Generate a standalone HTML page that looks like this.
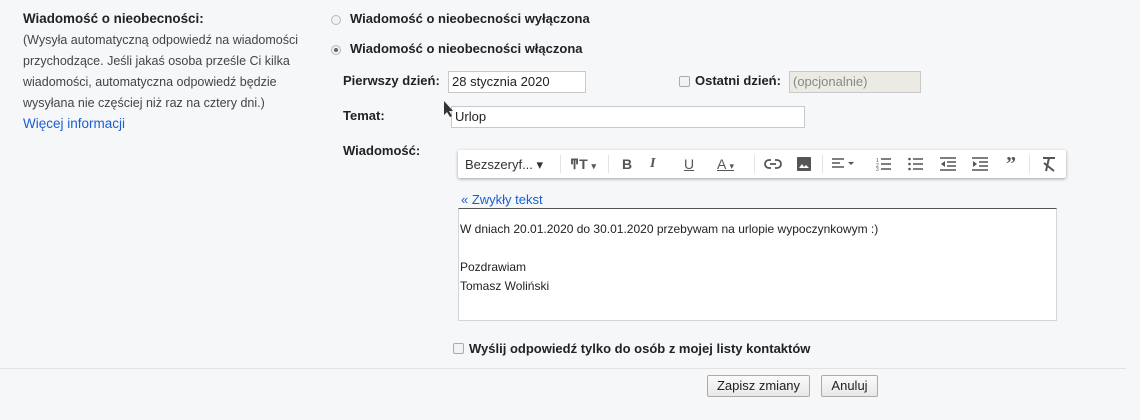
<!DOCTYPE html>
<html><head><meta charset="utf-8"><style>
body{margin:0;width:1140px;height:420px;background:#f6f7f9;font-family:"Liberation Sans",Arial,sans-serif;color:#222;position:relative;overflow:hidden}
.a{position:absolute;white-space:nowrap}
.b{font-weight:bold;font-size:13px}
.d{font-size:12.5px;color:#444;line-height:21px}
.inp{position:absolute;background:#fff;border:1px solid #c9c9c9;box-sizing:border-box;font-size:13px;padding:2px 3px;color:#222}
.rad{position:absolute;width:10px;height:10px;border:1px solid #b9b9b9;border-radius:50%;background:#f2f2f2;box-sizing:border-box}
.cb{position:absolute;width:11px;height:11px;border:1px solid #aaa;border-radius:2px;background:#f3f3f3;box-sizing:border-box}
.btn{position:absolute;border:1px solid #aaa;background:linear-gradient(#fafafa,#e8e8e8);font-size:13px;text-align:center;line-height:19px;box-sizing:border-box;border-radius:2px}
.tb{position:absolute;left:458px;top:150px;width:608px;height:28px;background:#fff;box-shadow:0 1px 3px rgba(0,0,0,.35);border-radius:2px}
.ti{position:absolute;top:6px;font-size:14px;color:#555;font-weight:bold}
.sep{position:absolute;top:5px;width:1px;height:18px;background:#e3e3e3}
</style></head><body>
<div class="a b" style="left:23px;top:11px;font-size:13.4px">Wiadomość o nieobecności:</div>
<div class="a d" style="left:23px;top:30px">(Wysyła automatyczną odpowiedź na wiadomości<br>przychodzące. Jeśli jakaś osoba prześle Ci kilka<br>wiadomości, automatyczna odpowiedź będzie<br>wysyłana nie częściej niż raz na cztery dni.)</div>
<div class="a" style="left:23px;top:116px;font-size:13.5px;color:#1a5fd0">Więcej informacji</div>

<div class="rad" style="left:331px;top:15px"></div>
<div class="a b" style="left:350px;top:11px">Wiadomość o nieobecności wyłączona</div>
<div class="rad" style="left:331px;top:45px"></div><div class="a" style="left:334px;top:48px;width:4px;height:4px;border-radius:50%;background:#666"></div>
<div class="a b" style="left:350px;top:41px">Wiadomość o nieobecności włączona</div>

<div class="a b" style="left:343px;top:73px">Pierwszy dzień:</div>
<div class="inp" style="left:448px;top:71px;width:138px;height:22px">28 stycznia 2020</div>
<div class="cb" style="left:679px;top:76px"></div>
<div class="a b" style="left:695px;top:73px">Ostatni dzień:</div>
<div class="inp" style="left:789px;top:71px;width:132px;height:22px;background:#ebebe4;color:#888">(opcjonalnie)</div>

<div class="a b" style="left:343px;top:108px">Temat:</div>
<div class="inp" style="left:451px;top:106px;width:354px;height:22px">Urlop</div>
<svg class="a" style="left:443px;top:100px" width="12" height="18"><path d="M1 1 L1 15 L4 12 L7 17 L9 16 L6 11 L10 11 Z" fill="#333"/></svg>

<div class="a b" style="left:343px;top:143px">Wiadomość:</div>
<div class="tb">
<div class="a" style="left:7px;top:7px;font-size:13px;color:#333">Bezszeryf... ▾</div>
<div class="sep" style="left:102px"></div>
<div class="ti" style="left:112px">ͳT <span style="font-size:9px">▾</span></div>
<div class="sep" style="left:150px"></div>
<div class="ti" style="left:164px">B</div>
<div class="ti" style="left:192px;font-style:italic;font-family:'Liberation Serif'">I</div>
<div class="ti" style="left:226px;text-decoration:underline;font-weight:normal">U</div>
<div class="ti" style="left:259px;text-decoration:underline;font-weight:normal">A <span style="font-size:9px;text-decoration:none">▾</span></div>
<div class="sep" style="left:296px"></div>
<svg class="a" style="left:306px;top:8px" width="18" height="12"><path d="M7 2H5a4 4 0 0 0 0 8h2M11 2h2a4 4 0 0 1 0 8h-2M6 6h6" stroke="#555" stroke-width="1.8" fill="none"/></svg>
<svg class="a" style="left:338px;top:6px" width="16" height="16"><rect x="1" y="1" width="14" height="14" rx="1" fill="#555"/><path d="M3 12l3-4 2 3 2-2 3 3z" fill="#fff"/></svg>
<div class="sep" style="left:364px"></div>
<svg class="a" style="left:374px;top:8px" width="28" height="12"><path d="M0 1h12M0 5h8M0 9h12" stroke="#555" stroke-width="1.6"/><path d="M16 4l3 3 3-3z" fill="#555"/></svg>
<svg class="a" style="left:418px;top:7px" width="16" height="14"><path d="M5 2h10M5 7h10M5 12h10" stroke="#555" stroke-width="1.5"/><text x="0" y="5" font-size="5" fill="#555">1</text><text x="0" y="10" font-size="5" fill="#555">2</text><text x="0" y="14" font-size="5" fill="#555">3</text></svg>
<svg class="a" style="left:450px;top:7px" width="16" height="14"><path d="M5 2h10M5 7h10M5 12h10" stroke="#555" stroke-width="1.5"/><circle cx="1.5" cy="2" r="1.3" fill="#555"/><circle cx="1.5" cy="7" r="1.3" fill="#555"/><circle cx="1.5" cy="12" r="1.3" fill="#555"/></svg>
<svg class="a" style="left:482px;top:7px" width="16" height="14"><path d="M0 1h16M7 5h9M7 9h9M0 13h16" stroke="#555" stroke-width="1.5"/><path d="M5 4v6L1 7z" fill="#555"/></svg>
<svg class="a" style="left:514px;top:7px" width="16" height="14"><path d="M0 1h16M7 5h9M7 9h9M0 13h16" stroke="#555" stroke-width="1.5"/><path d="M1 4v6L5 7z" fill="#555"/></svg>
<div class="ti" style="left:548px;top:3px;font-size:20px;font-family:'Liberation Serif'">”</div>
<div class="sep" style="left:571px"></div>
<svg class="a" style="left:583px;top:6px" width="16" height="16"><path d="M2 2h12M8 2l-3 13M3 7l10 8" stroke="#555" stroke-width="2" fill="none"/></svg>
</div>
<div class="a" style="left:461px;top:192px;font-size:13px;color:#1a5fd0">« Zwykły tekst</div>
<div class="a" style="left:458px;top:208px;width:599px;height:113px;background:#fff;border:1px solid #d5d5d5;border-top:1px solid #555;box-sizing:border-box"></div>
<div class="a" style="left:460px;top:220px;font-size:12px;line-height:19px;color:#222">W dniach 20.01.2020 do 30.01.2020 przebywam na urlopie wypoczynkowym :)<br><br>Pozdrawiam<br>Tomasz Woliński</div>

<div class="cb" style="left:453px;top:343px"></div>
<div class="a b" style="left:469px;top:341px">Wyślij odpowiedź tylko do osób z mojej listy kontaktów</div>
<div class="a" style="left:0;top:368px;width:1126px;height:1px;background:#e2e2e2"></div>
<div class="btn" style="left:707px;top:375px;width:103px;height:22px">Zapisz zmiany</div>
<div class="btn" style="left:821px;top:375px;width:57px;height:22px">Anuluj</div>
</body></html>
